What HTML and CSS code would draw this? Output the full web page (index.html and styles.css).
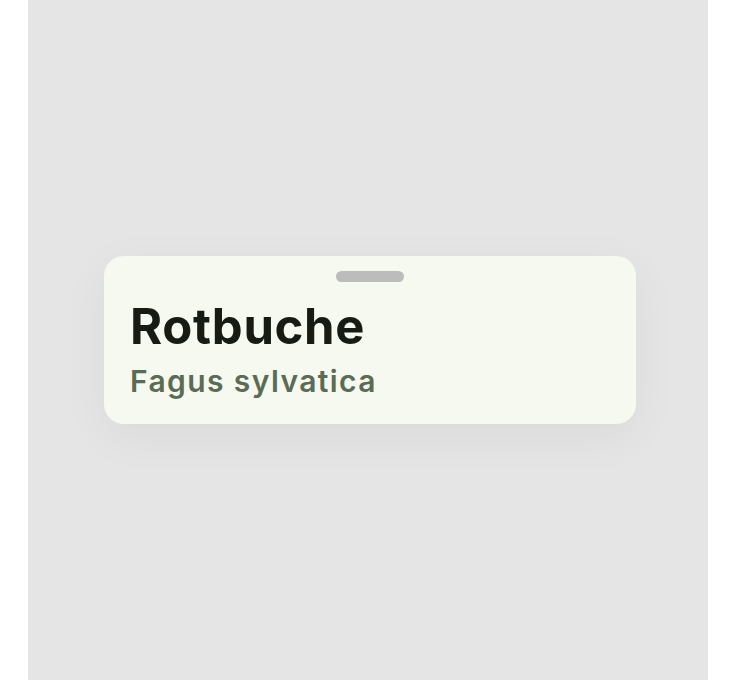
FILE: index.html
```html
<!DOCTYPE html>
<html lang="de">
<head>
<meta charset="utf-8">
<title>Rotbuche</title>
<link rel="stylesheet" href="styles.css">
</head>
<body>
<div class="frame">
  <div class="card">
    <div class="handle"></div>
    <h1 class="title">Rotbuche</h1>
    <p class="subtitle">Fagus sylvatica</p>
  </div>
</div>
</body>
</html>
```
FILE: styles.css
```css
html, body {
  margin: 0;
  padding: 0;
  background: #ffffff;
}
.frame {
  box-sizing: border-box;
  width: 680px;
  height: 680px;
  margin-left: 28px;
  padding-left: 76px;
  background: #e5e5e5;
  display: flex;
  align-items: center;
  font-family: Inter, "Noto Sans", sans-serif;
}
.card {
  box-sizing: border-box;
  width: 532px;
  height: 168px;
  background: #f6f9f0;
  border-radius: 20px;
  padding: 15px 26px 0;
  box-shadow: 0 12px 48px rgba(0, 0, 0, 0.05);
  display: flex;
  flex-direction: column;
}
.handle {
  align-self: center;
  width: 68px;
  height: 11px;
  border-radius: 6px;
  background: #bcbcbc;
}
.title {
  margin: 16px 0 0;
  font-size: 49px;
  line-height: 58px;
  font-weight: 700;
  letter-spacing: 0.7px;
  color: #161b14;
}
.subtitle {
  margin: 7px 0 0;
  font-size: 30px;
  line-height: 36px;
  font-weight: 600;
  letter-spacing: 1.4px;
  color: #5a6c55;
}
```
